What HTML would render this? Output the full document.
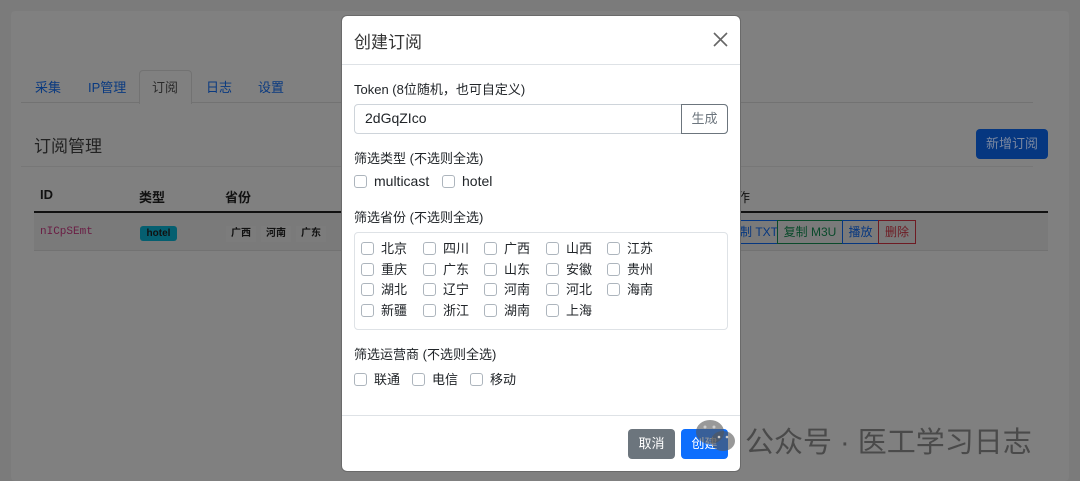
<!DOCTYPE html>
<html><head><meta charset="utf-8"><style>
*{box-sizing:border-box;margin:0;padding:0}
body{width:1080px;height:481px;overflow:hidden;background:#7b7b7b;font-family:"Liberation Sans","Noto Sans CJK SC",sans-serif;position:relative;color:#212529}
.a{position:absolute;white-space:nowrap}
.card{position:absolute;left:11px;top:11px;width:1058px;height:470px;background:#808080;border-radius:4px}
.tab{color:#0a3a80;font-size:13px;top:77px}
.cb{display:inline-block;width:13px;height:13px;border:1px solid #adb5bd;border-radius:3px;background:#fff;vertical-align:-2px;margin-right:7px}
.m{font-size:13px;color:#212529}
.pv{position:absolute;font-size:13px;color:#212529}
</style></head><body>
<div class="card"></div>
<div class="a" style="left:21px;top:102px;width:1012px;height:1px;background:#727272"></div>
<div class="a" style="left:139px;top:70px;width:53px;height:34px;border:1px solid #727272;border-bottom:none;background:#808080;border-radius:4px 4px 0 0"></div>
<div class="a tab" style="left:35px">采集</div>
<div class="a tab" style="left:88px">IP管理</div>
<div class="a tab" style="left:152px;color:#2a2a2a">订阅</div>
<div class="a tab" style="left:206px">日志</div>
<div class="a tab" style="left:258px">设置</div>
<div class="a" style="left:34px;top:132px;font-size:17px;color:#222">订阅管理</div>
<div class="a" style="left:976px;top:129px;width:72px;height:30px;background:#063780;border-radius:4px;color:#7b88a0;font-size:13px;text-align:center;line-height:30px">新增订阅</div>
<div class="a" style="left:21px;top:166px;width:1012px;height:1px;background:#777"></div>
<div class="a" style="left:40px;top:187px;font-size:13px;font-weight:bold;color:#111">ID</div>
<div class="a" style="left:139px;top:187px;font-size:13px;font-weight:bold;color:#111">类型</div>
<div class="a" style="left:225px;top:187px;font-size:13px;font-weight:bold;color:#111">省份</div>
<div class="a" style="left:34px;top:211px;width:1014px;height:2px;background:#111"></div>
<div class="a" style="left:34px;top:213px;width:1014px;height:38px;background:#7a7a7a;border-bottom:1px solid #727272"></div>
<div class="a" style="left:40px;top:226px;font-family:'Liberation Mono',monospace;font-size:11px;color:#6a1d44">nICpSEmt</div>
<div class="a" style="left:140px;top:226px;width:37px;height:15px;background:#055f70;border-radius:3px;font-size:10px;font-weight:bold;color:#111;text-align:center;line-height:15px">hotel</div>
<div class="a" style="left:226px;top:226px;width:30px;height:16px;background:#7c7c7c;font-size:10px;font-weight:bold;text-align:center;line-height:16px;color:#111">广西</div>
<div class="a" style="left:261px;top:226px;width:30px;height:16px;background:#7c7c7c;font-size:10px;font-weight:bold;text-align:center;line-height:16px;color:#111">河南</div>
<div class="a" style="left:296px;top:226px;width:30px;height:16px;background:#7c7c7c;font-size:10px;font-weight:bold;text-align:center;line-height:16px;color:#111">广东</div>
<div class="a" style="left:740px;top:220px;width:38px;height:24px;border:1px solid #063780;border-left:none;font-size:12px;color:#063780;line-height:22px">制 TXT</div>
<div class="a" style="left:777px;top:220px;width:66px;height:24px;border:1px solid #0a4a2b;font-size:12px;color:#0a4a2b;line-height:22px;text-align:center">复制 M3U</div>
<div class="a" style="left:842px;top:220px;width:37px;height:24px;border:1px solid #063780;font-size:12px;color:#063780;line-height:22px;text-align:center">播放</div>
<div class="a" style="left:878px;top:220px;width:38px;height:24px;border:1px solid #6e1b23;font-size:12px;color:#6e1b23;line-height:22px;text-align:center">删除</div>
<div class="a" style="left:737px;top:187px;font-size:13px;color:#111">作</div>

<div class="a" style="left:341px;top:15px;width:400px;height:457px;background:#fff;border-radius:6px;border:1px solid #6a6a6a"></div>
<div class="a" style="left:354px;top:28px;font-size:17px;color:#333">创建订阅</div>
<svg class="a" style="left:713px;top:32px" width="15" height="15" viewBox="0 0 15 15"><path d="M1 1L14 14M14 1L1 14" stroke="#666" stroke-width="1.6"/></svg>
<div class="a" style="left:342px;top:64px;width:398px;height:1px;background:#dee2e6"></div>
<div class="a m" style="left:354px;top:79px">Token (8位随机，也可自定义)</div>
<div class="a" style="left:354px;top:104px;width:374px;height:30px;border:1px solid #ced4da;border-radius:4px"></div>
<div class="a" style="left:681px;top:104px;width:47px;height:30px;border:1px solid #6c757d;border-radius:0 4px 4px 0;color:#6c757d;font-size:13px;text-align:center;line-height:28px">生成</div>
<div class="a" style="left:365px;top:110px;font-size:14px;color:#212529">2dGqZIco</div>
<div class="a m" style="left:354px;top:148px">筛选类型 (不选则全选)</div>
<div class="a m" style="left:354px;top:173px;font-size:14px"><span class="cb"></span>multicast</div>
<div class="a m" style="left:442px;top:173px;font-size:14px"><span class="cb"></span>hotel</div>
<div class="a m" style="left:354px;top:207px">筛选省份 (不选则全选)</div>
<div class="a" style="left:354px;top:232px;width:374px;height:98px;border:1px solid #dee2e6;border-radius:4px"></div>
<div class="pv" style="left:361px;top:239px;line-height:20.7px">
<div><span class="cb"></span>北京</div><div><span class="cb"></span>重庆</div><div><span class="cb"></span>湖北</div><div><span class="cb"></span>新疆</div></div>
<div class="pv" style="left:423px;top:239px;line-height:20.7px">
<div><span class="cb"></span>四川</div><div><span class="cb"></span>广东</div><div><span class="cb"></span>辽宁</div><div><span class="cb"></span>浙江</div></div>
<div class="pv" style="left:484px;top:239px;line-height:20.7px">
<div><span class="cb"></span>广西</div><div><span class="cb"></span>山东</div><div><span class="cb"></span>河南</div><div><span class="cb"></span>湖南</div></div>
<div class="pv" style="left:546px;top:239px;line-height:20.7px">
<div><span class="cb"></span>山西</div><div><span class="cb"></span>安徽</div><div><span class="cb"></span>河北</div><div><span class="cb"></span>上海</div></div>
<div class="pv" style="left:607px;top:239px;line-height:20.7px">
<div><span class="cb"></span>江苏</div><div><span class="cb"></span>贵州</div><div><span class="cb"></span>海南</div></div>
<div class="a m" style="left:354px;top:344px">筛选运营商 (不选则全选)</div>
<div class="a m" style="left:354px;top:369px"><span class="cb"></span>联通</div>
<div class="a m" style="left:412px;top:369px"><span class="cb"></span>电信</div>
<div class="a m" style="left:470px;top:369px"><span class="cb"></span>移动</div>
<div class="a" style="left:342px;top:415px;width:398px;height:1px;background:#dee2e6"></div>
<div class="a" style="left:628px;top:429px;width:47px;height:30px;background:#6c757d;border-radius:4px;color:#fff;font-size:13px;text-align:center;line-height:30px">取消</div>
<div class="a" style="left:681px;top:429px;width:47px;height:30px;background:#0d6efd;border-radius:4px;color:#fff;font-size:13px;text-align:center;line-height:30px">创建</div>
<svg class="a" style="left:695px;top:418px" width="45" height="38" viewBox="0 0 45 38"><ellipse cx="15" cy="14" rx="14" ry="12" fill="#555" opacity=".6"/><ellipse cx="28" cy="23" rx="12" ry="10" fill="#555" opacity=".6"/><circle cx="10" cy="9" r="1.5" fill="#ccc"/><circle cx="19" cy="9" r="1.5" fill="#ccc"/><circle cx="24" cy="19" r="1.3" fill="#ccc"/><circle cx="32" cy="19" r="1.3" fill="#ccc"/></svg>
<div class="a" style="left:745px;top:419px;font-size:29px;color:#4a4a4a">公众号 · 医工学习日志</div>
</body></html>
